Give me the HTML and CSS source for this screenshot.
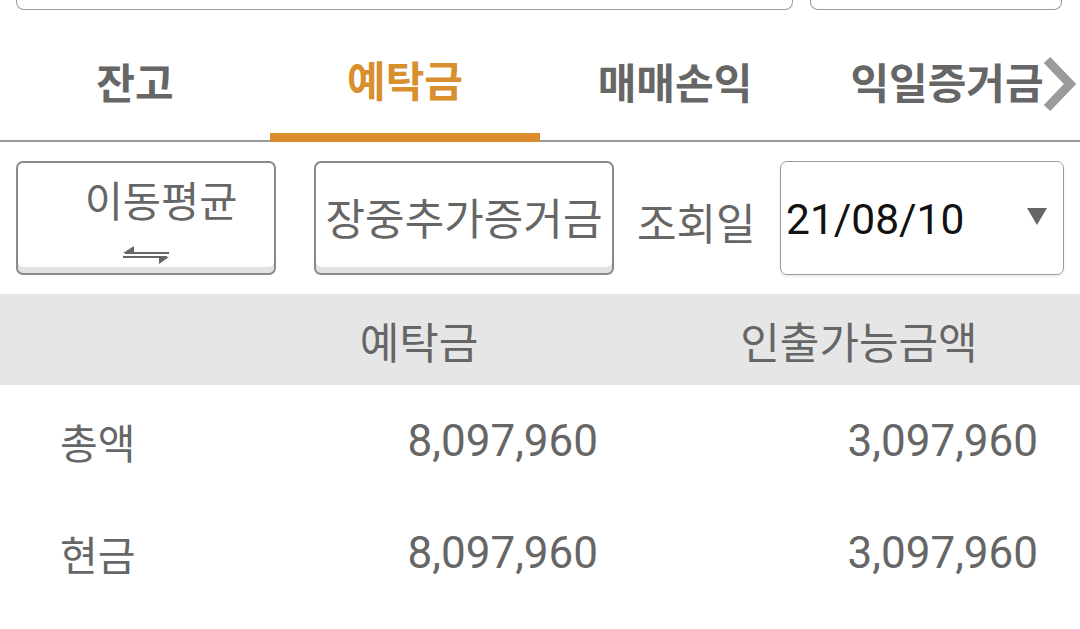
FILE: index.html
```html
<!DOCTYPE html>
<html lang="ko">
<head>
    <meta charset="UTF-8">
    <meta name="viewport" content="width=device-width, initial-scale=1.0">
    <title>예탁금</title>
    <link rel="stylesheet" href="styles.css">
</head>
<body>
    <div class="screen">
        <div class="topBar">
            <div class="topBox topBoxWide"></div>
            <div class="topBox topBoxNarrow"></div>
        </div>

        <div class="tabBar">
            <div class="tab">잔고</div>
            <div class="tab tabActive">예탁금</div>
            <div class="tab">매매손익</div>
            <div class="tab tabLast">익일증거금</div>
            <svg class="tabNext" width="36" height="56" viewBox="0 0 36 56">
                <polyline points="5,4 28,28 5,52" fill="none" stroke="#9a9a9a" stroke-width="9" />
            </svg>
        </div>

        <div class="controls">
            <button class="optButton avgButton">
                <span class="avgLabel">이동평균</span>
                <svg class="swapIcon" width="46" height="20" viewBox="0 0 46 20">
                    <rect x="2" y="7" width="44" height="2" fill="#666" />
                    <polygon points="0,8 11,1 11,8" fill="#666" />
                    <rect x="0" y="11" width="44" height="2" fill="#666" />
                    <polygon points="46,12 36,12 36,19" fill="#666" />
                </svg>
            </button>
            <button class="optButton marginButton">장중추가증거금</button>
            <div class="dateLabel">조회일</div>
            <div class="dateSelect">
                <span class="dateValue">21/08/10</span>
                <span class="dateArrow"></span>
            </div>
        </div>

        <div class="depositTable">
            <div class="tableRow tableHead">
                <div class="cell cellLabel"></div>
                <div class="cell cellMid">예탁금</div>
                <div class="cell cellEnd">인출가능금액</div>
            </div>
            <div class="tableRow">
                <div class="cell cellLabel">총액</div>
                <div class="cell cellMid">8,097,960</div>
                <div class="cell cellEnd">3,097,960</div>
            </div>
            <div class="tableRow">
                <div class="cell cellLabel">현금</div>
                <div class="cell cellMid">8,097,960</div>
                <div class="cell cellEnd">3,097,960</div>
            </div>
        </div>
    </div>
</body>
</html>
```

FILE: styles.css
```css
body {
    margin: 0;
    font-family: 'Roboto', 'Noto Sans CJK KR', sans-serif;
    background: #ffffff;
    color: #666666;
}

.screen {
    width: 1080px;
    height: 629px;
    overflow: hidden;
}

/* partial boxes cut off at the top */
.topBar {
    display: flex;
    gap: 17px;
    padding: 0 18px 0 16px;
    height: 10px;
}

.topBox {
    border: 1px solid #9a9a9a;
    border-top: none;
    border-radius: 0 0 8px 8px;
    box-sizing: border-box;
}

.topBoxWide {
    width: 777px;
}

.topBoxNarrow {
    flex: 1;
}

/* tabs */
.tabBar {
    position: relative;
    display: flex;
    height: 132px;
    border-bottom: 2px solid #9a9a9a;
    box-sizing: border-box;
}

.tab {
    flex: none;
    width: 270px;
    display: flex;
    align-items: center;
    justify-content: center;
    padding-top: 10px;
    font-size: 42px;
    font-weight: 700;
    color: #666666;
    box-sizing: border-box;
}

.tabActive {
    color: #d8902f;
    border-bottom: 9px solid #db8d2d;
    margin-bottom: -2px;
    padding-top: 13px;
}

.tabLast {
    padding-left: 4px;
}

.tabNext {
    position: absolute;
    right: 2px;
    top: 46px;
}

/* buttons row */
.controls {
    display: flex;
    align-items: center;
    padding: 19px 16px 0 16px;
    height: 114px;
}

.optButton {
    height: 114px;
    background: #ffffff;
    border: 2px solid #8a8a8a;
    border-radius: 7px;
    box-shadow: inset 0 -6px 0 #e2e2e2;
    font-family: inherit;
    font-size: 43px;
    color: #666666;
    padding: 0;
    box-sizing: border-box;
}

.avgButton {
    width: 260px;
    display: flex;
    flex-direction: column;
    align-items: center;
    justify-content: flex-start;
}

.avgLabel {
    margin-top: 14px;
    padding-left: 30px;
    line-height: 52px;
    font-size: 41.5px;
}

.swapIcon {
    margin-top: 16px;
}

.marginButton {
    width: 300px;
    margin-left: 38px;
    padding-bottom: 4px;
    white-space: nowrap;
}

.dateLabel {
    margin-left: 23px;
    font-size: 43px;
    padding-top: 6px;
}

.dateSelect {
    width: 284px;
    height: 114px;
    margin-left: auto;
    display: flex;
    align-items: center;
    justify-content: space-between;
    border: 1px solid #9a9a9a;
    border-radius: 7px;
    box-shadow: 0 2px 3px rgba(0, 0, 0, 0.08);
    padding: 0 16px 0 5px;
    box-sizing: border-box;
}

.dateValue {
    font-size: 42.5px;
    color: #111111;
    padding-top: 2px;
}

.dateArrow {
    width: 0;
    height: 0;
    border-left: 10px solid transparent;
    border-right: 10px solid transparent;
    border-top: 17px solid #666666;
    margin-top: -4px;
}

/* deposit table */
.depositTable {
    margin-top: 19px;
}

.tableRow {
    display: flex;
    height: 112px;
    align-items: center;
    font-size: 44px;
}

.tableRow.tableHead {
    height: 91px;
    background: #e6e6e6;
    font-size: 43px;
}

.cell {
    box-sizing: border-box;
}

.cellLabel {
    width: 240px;
    padding-left: 60px;
    font-size: 41px;
}

.cellMid {
    width: 400px;
    padding-right: 42px;
    text-align: right;
}

.cellEnd {
    width: 440px;
    padding: 0 42px 0 40px;
    text-align: right;
}

.tableHead .cellMid,
.tableHead .cellEnd {
    text-align: center;
}
```
